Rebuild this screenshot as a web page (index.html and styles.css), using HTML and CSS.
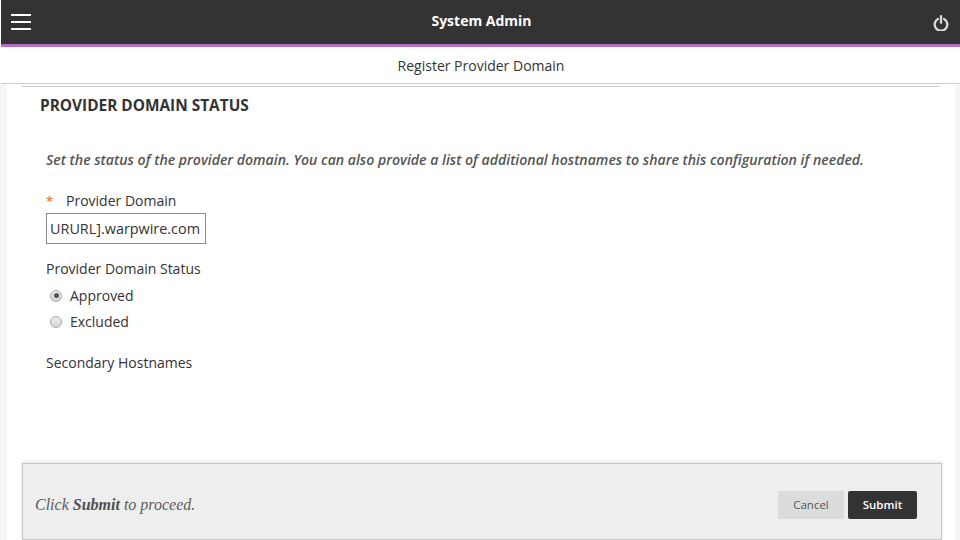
FILE: index.html
```html
<!DOCTYPE html>
<html lang="en">
<head>
<meta charset="utf-8">
<title>Register Provider Domain</title>
<link rel="stylesheet" href="styles.css">
</head>
<body>
<header class="topbar">
  <button class="menu" aria-label="Menu"><span></span><span></span><span></span></button>
  <div class="topbar-title">System Admin</div>
  <svg class="power" width="16" height="16" viewBox="0 0 16 16" fill="none" stroke="#dcdcdc" stroke-width="2.3" stroke-linecap="round" aria-hidden="true">
    <path d="M4.9 3.9A6.3 6.3 0 1 0 11.1 3.9"/>
    <path d="M8 1.2v6.6"/>
  </svg>
</header>
<div class="subbar">Register Provider Domain</div>
<div class="shell">
  <main class="content">
    <section class="panel">
      <h2 class="section-title">PROVIDER DOMAIN STATUS</h2>
      <p class="instructions">Set the status of the provider domain. You can also provide a list of additional hostnames to share this configuration if needed.</p>
      <div class="field-label"><span class="req">*</span>Provider Domain</div>
      <div class="textbox"><div class="textbox-inner"><span>[YOURURL].warpwire.com</span></div></div>
      <div class="group-label">Provider Domain Status</div>
      <label class="radio-row"><span class="radio checked"></span>Approved</label>
      <label class="radio-row"><span class="radio"></span>Excluded</label>
      <div class="secondary">Secondary Hostnames</div>
    </section>
    <footer class="actions">
      <div class="hint">Click <b>Submit</b> to proceed.</div>
      <div class="buttons">
        <button class="btn cancel">Cancel</button>
        <button class="btn submit">Submit</button>
      </div>
    </footer>
  </main>
</div>
</body>
</html>
```
FILE: styles.css
```css
* { box-sizing: border-box; }
html, body { margin: 0; height: 540px; overflow: hidden; }
body { font-family: "Open Sans", sans-serif; color: #333; background: #fff; display: flex; flex-direction: column; }
.topbar { height: 47px; flex: none; margin-left: 1px; background: #333; border-bottom: 3px solid #b36fc4; display: flex; align-items: center; padding: 0 12px 0 10px; position: relative; }
.menu { width: 20px; height: 16px; padding: 0; border: 0; background: none; display: flex; flex-direction: column; justify-content: space-between; }
.menu span { display: block; height: 2px; background: #fff; }
.topbar-title { flex: 1; text-align: center; color: #fff; font-weight: 700; font-size: 14px; margin-top: -3px; margin-left: -1px; }
.power { margin-top: 2px; margin-right: -1px; }
.subbar { height: 37px; flex: none; border-bottom: 1px solid #ccc; margin-left: 1px; text-align: center; font-size: 14px; line-height: 37px; padding-left: 1px; }
.shell { flex: 1; min-height: 0; background: #f6f6f8; padding: 0 5px 0 7px; display: flex; }
.content { flex: 1; background: #fff; padding: 2px 13px 0 15px; display: flex; flex-direction: column; }
.panel { flex: 1; border-top: 1px solid #ccc; padding: 0 18px 0 18px; margin-right: 2px; }
.section-title { margin: 10px 0 0; font-size: 15.4px; line-height: 18px; font-weight: 700; color: #333; }
.instructions { margin: 35px 0 0 6px; font-size: 14.1px; line-height: 20px; font-style: italic; font-weight: 600; color: #555; white-space: nowrap; }
.field-label { margin: 21px 0 0 6px; font-size: 14px; line-height: 20px; }
.req { color: #e8893a; display: inline-block; width: 20px; font-weight: 700; font-size: 13px; }
.textbox { margin: 2px 0 0 6px; width: 160px; height: 31px; border: 1px solid #8a8a8a; display: flex; align-items: center; padding: 0 5px 0 4px; background: #fff; }
.textbox-inner { flex: 1; min-width: 0; display: flex; justify-content: flex-end; overflow: hidden; font-size: 14.4px; white-space: nowrap; }
.textbox-inner span { flex: none; }
.group-label { margin: 15px 0 0 6px; font-size: 14px; line-height: 20px; }
.radio-row { display: flex; align-items: center; margin: 7px 0 0 10px; font-size: 14px; line-height: 19px; }
.radio-row + .radio-row { margin-top: 7px; }
.radio { width: 12px; height: 12px; border-radius: 50%; border: 1px solid #a8a8a8; background: linear-gradient(#ededed, #d6d6d6); margin-right: 8px; display: flex; align-items: center; justify-content: center; }
.radio.checked::after { content: ""; width: 5px; height: 5px; border-radius: 50%; background: #555; }
.secondary { margin: 22px 0 0 6px; font-size: 14px; line-height: 20px; }
.actions { flex: none; height: 77px; background: #eee; border: 1px solid #c8c8c8; box-shadow: 0 -1px 3px rgba(0,0,0,.12); display: flex; align-items: center; justify-content: space-between; padding: 6px 24px 0 12px; }
.hint { font-family: "Liberation Serif", serif; font-style: italic; font-size: 16px; color: #5c5c5c; }
.hint b { color: #505050; }
.buttons { display: flex; gap: 4px; }
.btn { height: 28px; border: 0; font-family: "Open Sans", sans-serif; font-size: 11.5px; padding: 0; }
.cancel { width: 66px; background: #dcdcdc; color: #555; }
.submit { width: 69px; background: #333; color: #fff; font-weight: 600; border-radius: 2px; }
```
